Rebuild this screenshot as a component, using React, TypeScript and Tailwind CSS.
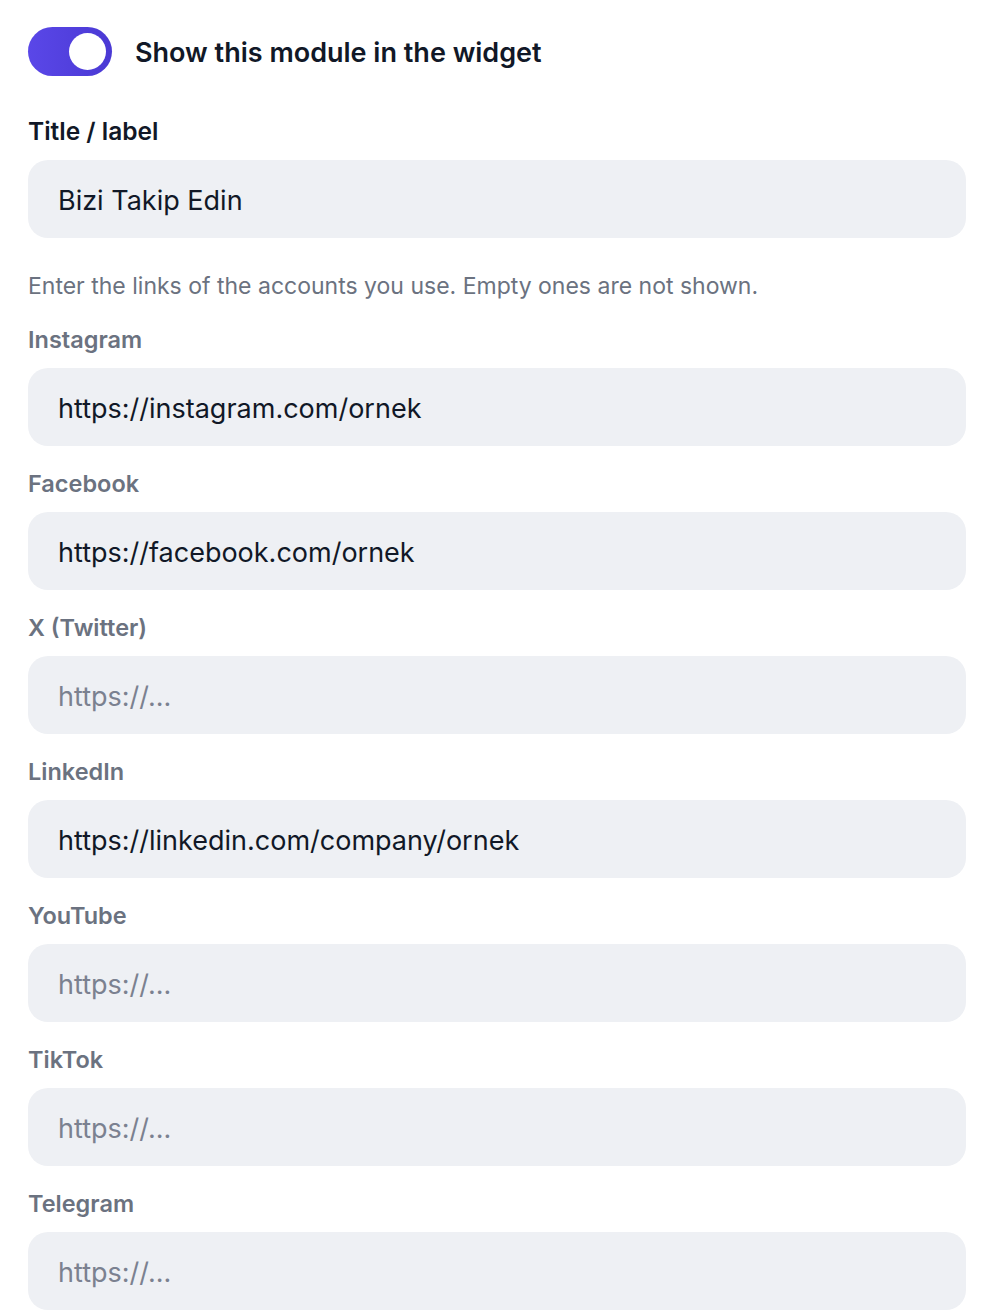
import { useState } from "react";

interface SocialField {
  label: string;
  value: string;
}

const SOCIAL_FIELDS: SocialField[] = [
  { label: "Instagram", value: "https://instagram.com/ornek" },
  { label: "Facebook", value: "https://facebook.com/ornek" },
  { label: "X (Twitter)", value: "" },
  { label: "LinkedIn", value: "https://linkedin.com/company/ornek" },
  { label: "YouTube", value: "" },
  { label: "TikTok", value: "" },
  { label: "Telegram", value: "" },
];

const inputClass =
  "block h-[78px] w-full rounded-[20px] border-0 bg-[#eef0f4] px-[30px] pt-[2px] text-[27px] text-[#111827] outline-none placeholder:text-[#7b8190]";

export default function App() {
  const [enabled, setEnabled] = useState(true);
  const [title, setTitle] = useState("Bizi Takip Edin");
  const [links, setLinks] = useState(SOCIAL_FIELDS.map((f) => f.value));

  return (
    <div
      className="min-h-screen bg-white px-[28px] pt-[27px] pb-4"
      style={{ fontFamily: "Inter, 'Noto Sans', sans-serif" }}
    >
      <label className="flex cursor-pointer items-center gap-[23px]">
        <button
          type="button"
          onClick={() => setEnabled((v) => !v)}
          className={
            enabled
              ? "flex h-[49px] w-[84px] items-center justify-end rounded-full bg-gradient-to-r from-[#5a47e8] to-[#4a39d4] p-[6px]"
              : "flex h-[49px] w-[84px] items-center justify-start rounded-full bg-[#d1d5db] p-[6px]"
          }
        >
          <span className="h-[37px] w-[37px] rounded-full bg-white" />
        </button>
        <span className="mt-[3px] text-[27px] font-semibold text-[#111827]">
          Show this module in the widget
        </span>
      </label>

      <div className="mt-[39px] text-[24.5px] leading-[32px] font-semibold text-[#111827]">
        Title / label
      </div>
      <input
        className={`${inputClass} mt-[13px]`}
        value={title}
        onChange={(e) => setTitle(e.target.value)}
      />

      <p className="mt-[34px] text-[23px] leading-[28px] text-[#6b7280]">
        Enter the links of the accounts you use. Empty ones are not shown.
      </p>

      <div className="mt-[26px] flex flex-col gap-[24px]">
        {SOCIAL_FIELDS.map((field, i) => (
          <div key={field.label}>
            <div className="text-[23.5px] leading-[28px] font-semibold text-[#6b7280]">
              {field.label}
            </div>
            <input
              className={`${inputClass} mt-[14px]`}
              placeholder="https://..."
              value={links[i]}
              onChange={(e) =>
                setLinks((prev) => prev.map((v, j) => (j === i ? e.target.value : v)))
              }
            />
          </div>
        ))}
      </div>
    </div>
  );
}
